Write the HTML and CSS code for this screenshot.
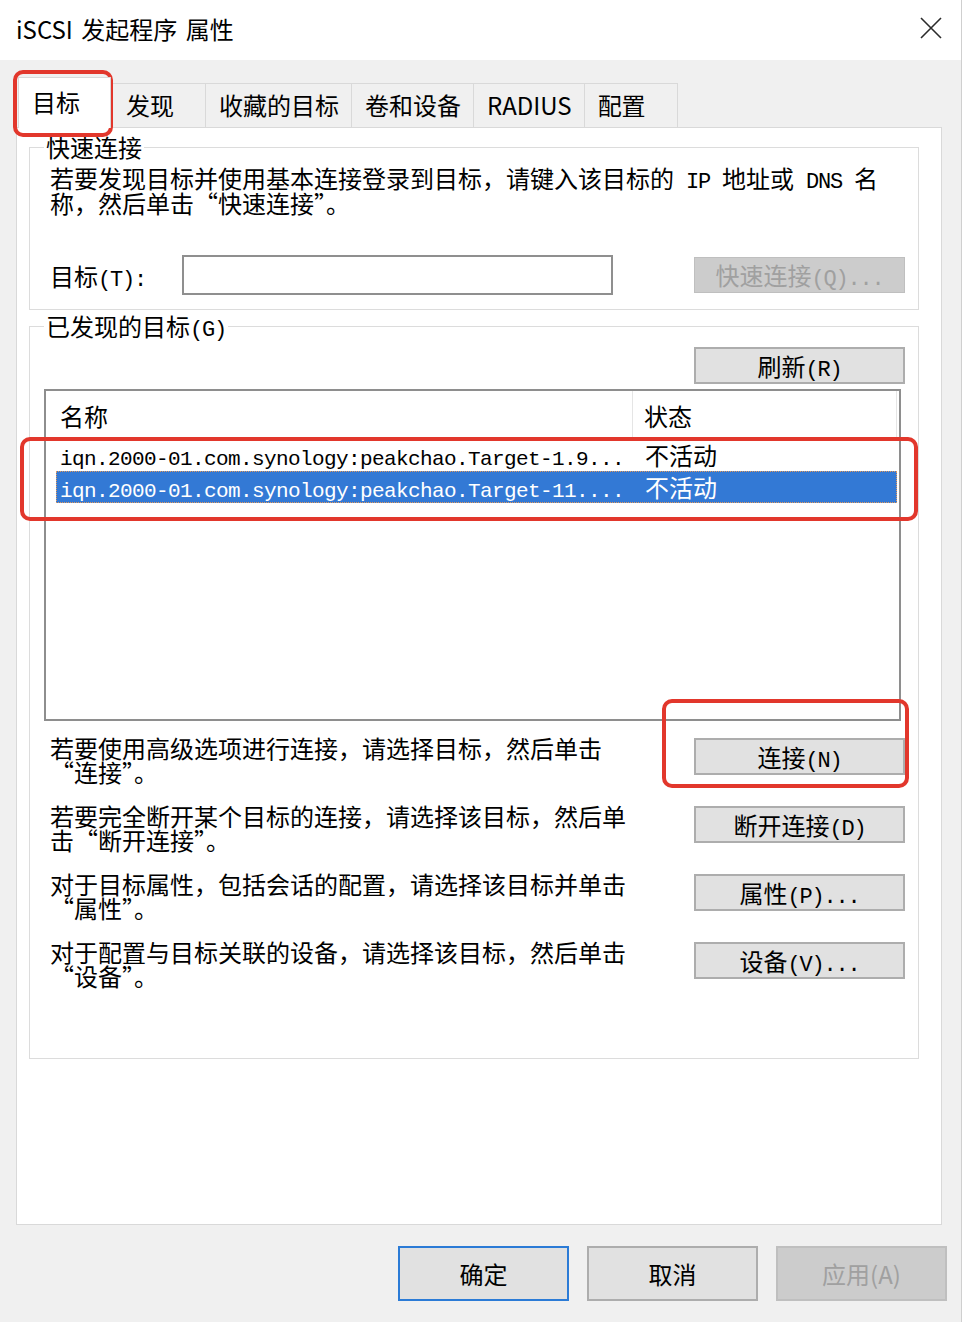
FILE: index.html
```html
<!DOCTYPE html>
<html lang="zh-CN">
<head>
    <meta charset="UTF-8">
    <meta name="viewport" content="width=device-width, initial-scale=1.0">
    <title>iSCSI 发起程序 属性</title>
    <link rel="stylesheet" href="styles.css">
</head>
<body>
    <div class="dialog">
        <header class="titlebar">
            <span class="title">iSCSI 发起程序 属性</span>
            <svg class="close" width="22" height="22" viewBox="0 0 22 22">
                <path d="M1 1 L21 21 M21 1 L1 21" stroke="#2b2b2b" stroke-width="1.6" fill="none"/>
            </svg>
        </header>

        <div class="sheet">
            <nav class="tabs">
                <div class="tab active">目标</div>
                <div class="tab">发现</div>
                <div class="tab">收藏的目标</div>
                <div class="tab">卷和设备</div>
                <div class="tab">RADIUS</div>
                <div class="tab">配置</div>
            </nav>

            <section class="panel">
                <fieldset class="group quick">
                    <legend>快速连接</legend>
                    <p class="desc">若要发现目标并使用基本连接登录到目标，请键入该目标的<span class="en"> IP </span>地址或<span class="en"> DNS </span>名<br>称，然后单击“快速连接”。</p>
                    <div class="target-row">
                        <label>目标<span class="en">(T):</span></label>
                        <input type="text" class="field">
                        <button class="btn disabled">快速连接<span class="en">(Q)...</span></button>
                    </div>
                </fieldset>

                <fieldset class="group discovered">
                    <legend>已发现的目标<span class="en">(G)</span></legend>
                    <div class="refresh-row">
                        <button class="btn">刷新<span class="en">(R)</span></button>
                    </div>

                    <div class="listview">
                        <div class="lv-head">
                            <div class="col-name">名称</div>
                            <div class="col-state">状态</div>
                        </div>
                        <div class="lv-row">
                            <div class="col-name"><span class="iqn">iqn.2000-01.com.synology:peakchao.Target-1.9...</span></div>
                            <div class="col-state">不活动</div>
                        </div>
                        <div class="lv-row selected">
                            <div class="col-name"><span class="iqn">iqn.2000-01.com.synology:peakchao.Target-11....</span></div>
                            <div class="col-state">不活动</div>
                        </div>
                    </div>

                    <div class="action first">
                        <p>若要使用高级选项进行连接，请选择目标，然后单击<br>“连接”。</p>
                        <button class="btn">连接<span class="en">(N)</span></button>
                    </div>
                    <div class="action">
                        <p>若要完全断开某个目标的连接，请选择该目标，然后单<br>击“断开连接”。</p>
                        <button class="btn">断开连接<span class="en">(D)</span></button>
                    </div>
                    <div class="action">
                        <p>对于目标属性，包括会话的配置，请选择该目标并单击<br>“属性”。</p>
                        <button class="btn">属性<span class="en">(P)...</span></button>
                    </div>
                    <div class="action">
                        <p>对于配置与目标关联的设备，请选择该目标，然后单击<br>“设备”。</p>
                        <button class="btn">设备<span class="en">(V)...</span></button>
                    </div>
                </fieldset>
            </section>
        </div>

        <footer class="footer">
            <button class="dlg-btn default">确定</button>
            <button class="dlg-btn">取消</button>
            <button class="dlg-btn disabled">应用(A)</button>
        </footer>

        <!-- red marks from the screenshot -->
        <div class="mark mark-tab"></div>
        <div class="mark mark-rows"></div>
        <div class="mark mark-connect"></div>
    </div>
</body>
</html>
```

FILE: styles.css
```css
body {
    margin: 0;
    font-family: "Noto Sans CJK SC", "Liberation Sans", sans-serif;
    color: #000;
}
.dialog {
    position: relative;
    width: 962px;
    height: 1322px;
    box-sizing: border-box;
    background: #f0f0f0;
    border-right: 1px solid #cfcfcf;
    overflow: hidden;
}
.titlebar {
    height: 60px;
    background: #fff;
    display: flex;
    align-items: center;
    justify-content: space-between;
    padding: 0 19px 0 16px;
}
.title {
    font-size: 24px;
    line-height: 30px;
    word-spacing: 3px;
    margin-top: -2px;
}
.close {
    margin-top: -4px;
}
.en {
    font-family: "Liberation Mono", monospace;
    font-size: 22px;
    letter-spacing: -1.2px;
    line-height: 0;
}

/* tabs + page */
.sheet {
    padding: 17px 19px 0 16px;
}
.tabs {
    display: flex;
    align-items: flex-end;
    padding-left: 2px;
    font-size: 24px;
}
.tab {
    height: 44px;
    box-sizing: border-box;
    line-height: 42px;
    padding: 0 12px 0 13px;
    min-width: 94px;
    border: 1px solid #d9d9d9;
    border-bottom: none;
    margin-left: -1px;
    background: #f0f0f0;
}
.tab.active {
    height: 51px;
    width: 93px;
    min-width: 0;
    line-height: 48px;
    margin-left: 0;
    margin-right: 2px;
    margin-bottom: -1px;
    background: #fff;
    position: relative;
    z-index: 1;
}
.panel {
    height: 1098px;
    box-sizing: border-box;
    background: #fff;
    border: 1px solid #d9d9d9;
    padding: 7px 0 0 12px;
}

/* group boxes */
.group {
    width: 890px;
    box-sizing: border-box;
    margin: 0;
    padding: 0 13px 14px 14px;
    border: 1px solid #dcdcdc;
    min-inline-size: 0;
}
.group legend {
    font-size: 24px;
    line-height: 24px;
    padding: 0 2px;
}
.desc {
    margin: 6px 0 0;
    padding-left: 6px;
    font-size: 24px;
    line-height: 25px;
}
.target-row {
    display: flex;
    align-items: center;
    margin-top: 40px;
    padding-left: 6px;
    font-size: 24px;
}
.target-row label {
    width: 132px;
}
.field {
    width: 431px;
    height: 40px;
    box-sizing: border-box;
    border: 2px solid #8f8f8f;
    margin: 0 81px 0 0;
    padding: 0;
}
.btn {
    width: 211px;
    height: 37px;
    box-sizing: border-box;
    background: #e1e1e1;
    border: 2px solid #adadad;
    font-family: inherit;
    font-size: 24px;
    line-height: 30px;
    color: #000;
    padding: 0;
}
.btn.disabled {
    height: 36px;
    background: #cccccc;
    border: 1px solid #bfbfbf;
    color: #a0a0a0;
}
.discovered {
    margin-top: 4px;
    height: 745px;
}
.refresh-row {
    display: flex;
    justify-content: flex-end;
    margin-top: 9px;
}

/* list view */
.listview {
    width: 857px;
    height: 332px;
    box-sizing: border-box;
    margin-top: 5px;
    border: 2px solid #8e8e8e;
    font-size: 24px;
}
.lv-head {
    display: flex;
    height: 48px;
    line-height: 50px;
}
.lv-head .col-name {
    width: 587px;
    box-sizing: border-box;
    padding-left: 14px;
    border-right: 1px solid #e5e5e5;
}
.lv-head .col-state {
    width: 264px;
    box-sizing: border-box;
    padding-left: 11px;
    border-right: 1px solid #e5e5e5;
}
.lv-row {
    display: flex;
    height: 32px;
    line-height: 32px;
    margin-left: 10px;
    width: 841px;
}
.lv-row .col-name {
    width: 577px;
    box-sizing: border-box;
    padding-left: 4px;
}
.lv-row .col-state {
    width: 264px;
    box-sizing: border-box;
    padding-left: 12px;
}
.iqn {
    font-family: "Liberation Mono", monospace;
    font-size: 21px;
    letter-spacing: -0.6px;
    line-height: 0;
}
.lv-row.selected {
    background: #3379d5;
    color: #fff;
    outline: 1px dotted #e39a5c;
    outline-offset: -1px;
}

/* action rows */
.action {
    display: flex;
    justify-content: space-between;
    align-items: flex-start;
    margin-top: 20px;
}
.action.first {
    margin-top: 15px;
}
.action p {
    margin: 0;
    padding-left: 6px;
    font-size: 24px;
    line-height: 24px;
}
.action .btn {
    margin-top: 2px;
}

/* bottom buttons */
.footer {
    display: flex;
    justify-content: flex-end;
    gap: 18px;
    padding: 21px 14px 0 0;
}
.dlg-btn {
    width: 171px;
    height: 55px;
    box-sizing: border-box;
    background: #e1e1e1;
    border: 2px solid #adadad;
    font-family: inherit;
    font-size: 24px;
    color: #000;
    padding: 0;
}
.dlg-btn.default {
    border-color: #2b7bd6;
}
.dlg-btn.disabled {
    background: #cccccc;
    border-color: #bfbfbf;
    color: #a0a0a0;
}

/* annotation boxes */
.mark {
    position: absolute;
    box-sizing: border-box;
    border: 4px solid #e2372c;
    border-radius: 10px;
}
.mark-tab {
    left: 13px;
    top: 70px;
    width: 100px;
    height: 67px;
}
.mark-rows {
    left: 20px;
    top: 437px;
    width: 898px;
    height: 84px;
}
.mark-connect {
    left: 662px;
    top: 699px;
    width: 247px;
    height: 89px;
}
```
